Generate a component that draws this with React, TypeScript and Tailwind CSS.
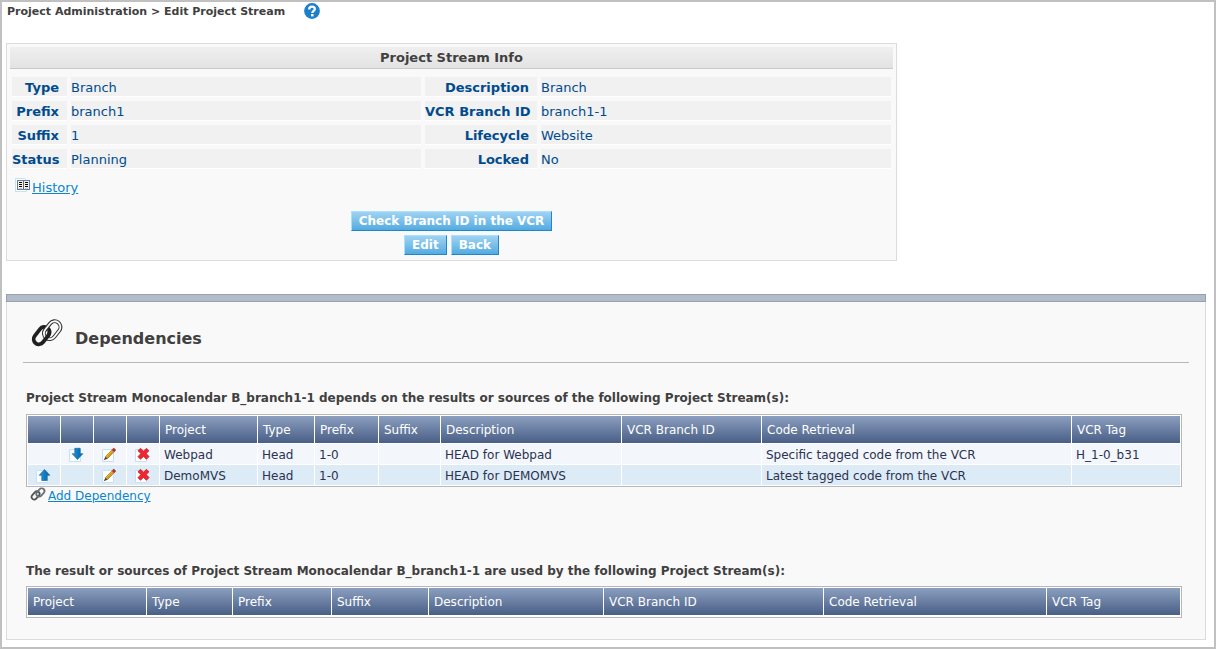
import React from "react";

type Field = { label: string; value: string };

const leftFields: Field[] = [
  { label: "Type", value: "Branch" },
  { label: "Prefix", value: "branch1" },
  { label: "Suffix", value: "1" },
  { label: "Status", value: "Planning" },
];

const rightFields: Field[] = [
  { label: "Description", value: "Branch" },
  { label: "VCR Branch ID", value: "branch1-1" },
  { label: "Lifecycle", value: "Website" },
  { label: "Locked", value: "No" },
];

const columns = [
  "Project",
  "Type",
  "Prefix",
  "Suffix",
  "Description",
  "VCR Branch ID",
  "Code Retrieval",
  "VCR Tag",
];

const rows = [
  {
    move: "down",
    cells: ["Webpad", "Head", "1-0", "", "HEAD for Webpad", "", "Specific tagged code from the VCR", "H_1-0_b31"],
  },
  {
    move: "up",
    cells: ["DemoMVS", "Head", "1-0", "", "HEAD for DEMOMVS", "", "Latest tagged code from the VCR", ""],
  },
];

function HelpIcon() {
  return (
    <svg viewBox="0 0 16 16" className="block size-4" aria-hidden="true">
      <circle cx="8" cy="8" r="7.9" fill="#1b80c9" />
      <path d="M5.2 6.5C5.2 4.6 6.3 3.7 8 3.7s2.8 1 2.8 2.4c0 1.8-2.5 1.9-2.5 3.9" fill="none" stroke="#fff" strokeWidth="2.3" />
      <rect x="7.1" y="11" width="2.4" height="2.4" fill="#fff" />
    </svg>
  );
}

function HistoryIcon() {
  return (
    <svg viewBox="0 0 15 14" className="block h-[14px] w-[15px]" aria-hidden="true">
      <path d="M.5.5h9l2 2v11H.5z" fill="#fdfeff" stroke="#c5e1f2" />
      <rect x="2.5" y="2.5" width="12" height="9" fill="#f5f0e4" stroke="#5f7cb5" />
      <path d="M8.5 3v8" stroke="#6b6b60" />
      <path d="M4 4.5h3M4 6.5h3M4 8.5h3M10 4.5h3M10 6.5h3M10 8.5h3" stroke="#000" />
      <path d="M4 10.5h3M10 10.5h3" stroke="#cfc6a8" />
    </svg>
  );
}

function PageBack() {
  return <path d="M.5 2.5h11v12H.5z" fill="#fdfeff" stroke="#c5e1f2" />;
}

function ArrowIcon({ up }: { up: boolean }) {
  return (
    <svg viewBox="0 0 15 15" className="block size-[15px]" aria-hidden="true">
      <defs>
        <linearGradient id={up ? "arrowUp" : "arrowDown"} x1="0" y1="0" x2="1" y2="0">
          <stop offset="0" stopColor="#1b9be0" />
          <stop offset="1" stopColor="#075f9f" />
        </linearGradient>
      </defs>
      <PageBack />
      {up ? (
        <path d="M8.5 1.5l5.3 5.8h-2.6v5.2H5.8V7.3H3.2z" fill="url(#arrowUp)" stroke="#176aa5" strokeWidth=".7" />
      ) : (
        <path d="M8.5 12.5L3.2 6.7h2.6V1.3h5.4v5.4h2.6z" fill="url(#arrowDown)" stroke="#176aa5" strokeWidth=".7" />
      )}
    </svg>
  );
}

function PencilIcon() {
  return (
    <svg viewBox="0 0 15 15" className="block size-[15px]" aria-hidden="true">
      <PageBack />
      <path d="M3.4 9.7l6.8-7 2 2-6.8 7z" fill="#f0b41c" stroke="#93702a" strokeWidth=".7" />
      <path d="M4.6 11l6.8-7" stroke="#b8760b" strokeWidth=".8" />
      <path d="M10.2 2.7l1.5-1.7 2.1 2-1.6 1.7z" fill="#b52e36" stroke="#7c2329" strokeWidth=".5" />
      <path d="M3.4 9.7l2 2-3.7 1.5z" fill="#4b3d2e" />
    </svg>
  );
}

function DeleteIcon() {
  return (
    <svg viewBox="0 0 15 15" className="block size-[15px]" aria-hidden="true">
      <PageBack />
      <path
        d="M5.6 1.3l2.9 3 2.9-3 2.6 2.5-2.9 2.8 3 3-2.7 2.7-2.9-2.9-3 2.9-2.6-2.6 3-3.1-3-2.8z"
        fill="#ee2630"
        stroke="#c9151e"
        strokeWidth=".7"
      />
    </svg>
  );
}

function DependenciesIcon() {
  return (
    <svg viewBox="0 0 32 28" className="block h-7 w-8" aria-hidden="true">
      <g fill="none">
        <rect x="-5.2" y="-9.6" width="10.4" height="19.2" rx="5.2" transform="translate(10.6 16.6) rotate(38)" stroke="#202020" strokeWidth="3.8" />
        <g transform="translate(21.2 11.2) rotate(38)">
          <rect x="-5.8" y="-9.8" width="11.6" height="19.6" rx="5.8" stroke="#303030" strokeWidth="3.9" />
          <rect x="-5.8" y="-9.8" width="11.6" height="19.6" rx="5.8" stroke="#fafafa" strokeWidth="1.8" />
        </g>
        <path d="M3 -8.6A5.2 5.2 0 0 1 5.2 -4.4V1" transform="translate(10.6 16.6) rotate(38)" stroke="#202020" strokeWidth="3.8" />
      </g>
    </svg>
  );
}

function AddDependencyIcon() {
  return (
    <svg viewBox="0 0 16 14" className="block h-[14px] w-4" aria-hidden="true">
      <g fill="none" strokeWidth="1.8">
        <rect x="-2.6" y="-4.6" width="5.2" height="9.2" rx="2.6" transform="translate(5.6 8.4) rotate(42)" stroke="#4d5254" />
        <rect x="-2.7" y="-4.7" width="5.4" height="9.4" rx="2.7" transform="translate(10.4 5.5) rotate(42)" stroke="#6b7173" />
      </g>
    </svg>
  );
}

function FieldColumn({ fields, labelWidth }: { fields: Field[]; labelWidth: string }) {
  return (
    <dl className="flex min-w-0 flex-1 flex-col gap-1">
      {fields.map((f) => (
        <div key={f.label} className="flex h-5 gap-1 leading-[22px] text-[#004b8d]">
          <dt className={`${labelWidth} shrink-0 whitespace-nowrap border-b border-white bg-[#f1f1f1] pr-2 text-right font-bold`}>
            {f.label}
          </dt>
          <dd className="min-w-0 flex-1 border-b border-white bg-[#f1f1f1]">{f.value}</dd>
        </div>
      ))}
    </dl>
  );
}

function ActionButton({ children }: { children: React.ReactNode }) {
  return (
    <button
      type="button"
      className="h-5 cursor-pointer whitespace-nowrap border border-t-[#a9e3f9] border-r-[#1f86c9] border-b-[#1f86c9] border-l-[#a9e3f9] bg-linear-to-b from-[#9fd3f3] to-[#52abe0] px-[7px] text-[12px] leading-[18px] font-bold text-white"
    >
      {children}
    </button>
  );
}

const headCell =
  "h-[27px] bg-linear-to-b from-[#8c9fc0] to-[#4a5f86] px-[5px] py-0 text-left font-normal whitespace-nowrap text-white";
const tableStyle =
  "w-full table-fixed border-separate border-spacing-px border border-[#b8b8b8] bg-white text-[12px] leading-[18px]";

export default function App() {
  return (
    <div className="min-h-screen border-2 border-[#c0c0c0] bg-white px-1 pb-[6px] font-['Verdana','DejaVu_Sans',sans-serif] text-[13px] text-[#404040]">
      <header className="flex h-[41px] items-start gap-[19px] pl-px pt-px">
        <h1 className="text-[11px] leading-[18px] font-bold whitespace-nowrap">
          Project Administration &gt; Edit Project Stream
        </h1>
        <a href="#help" aria-label="Help">
          <HelpIcon />
        </a>
      </header>

      <section className="max-w-[891px] border border-[#dcdcdc] bg-[#f9f9f9] px-[3px] pt-[3px] pb-[5px]">
        <h2 className="h-[22px] border-b border-[#c8c8c8] bg-linear-to-b from-[#efefef] to-[#e3e3e3] text-center leading-[21px] font-bold">
          Project Stream Info
        </h2>
        <div className="flex gap-1 px-[2px] pt-2">
          <FieldColumn fields={leftFields} labelWidth="w-[55px]" />
          <div className="flex w-[466px] shrink-0">
            <FieldColumn fields={rightFields} labelWidth="w-28" />
          </div>
        </div>
        <a href="#history" className="ml-[5px] mt-[9px] flex w-fit items-start gap-[2px] text-[#0a85cf]">
          <HistoryIcon />
          <span className="leading-5 underline">History</span>
        </a>
        <div className="mt-[13px] flex flex-col items-center gap-1">
          <ActionButton>Check Branch ID in the VCR</ActionButton>
          <div className="flex gap-1">
            <ActionButton>Edit</ActionButton>
            <ActionButton>Back</ActionButton>
          </div>
        </div>
      </section>

      <section className="mt-[33px] mr-1">
        <div className="h-2 border border-[#98a1b2] bg-[#b3bac8]" />
        <div className="border border-t-0 border-[#dcdcdc] bg-[#f9f9f9] px-4 pb-[21px]">
          <div className="flex h-[61px] items-start gap-3 border-b border-[#b8b8b8] pt-[17px] pl-2">
            <DependenciesIcon />
            <h2 className="pt-2 text-[16px] leading-6 font-bold">Dependencies</h2>
          </div>

          <div className="pr-[7px] pl-[3px]">
            <h3 className="mt-[25px] mb-[6px] text-[12px] leading-5 font-bold">
              Project Stream Monocalendar B_branch1-1 depends on the results or sources of the following Project
              Stream(s):
            </h3>
            <table className={tableStyle}>
              <colgroup>
                <col className="w-8" />
                <col className="w-8" />
                <col className="w-8" />
                <col className="w-8" />
                <col className="w-[97px]" />
                <col className="w-14" />
                <col className="w-[63px]" />
                <col className="w-[61px]" />
                <col className="w-[180px]" />
                <col className="w-[139px]" />
                <col className="w-[309px]" />
                <col />
              </colgroup>
              <thead>
                <tr>
                  {["Move up", "Move down", "Edit", "Delete"].map((name) => (
                    <th key={name} aria-label={name} className={headCell} />
                  ))}
                  {columns.map((c) => (
                    <th key={c} className={headCell}>
                      {c}
                    </th>
                  ))}
                </tr>
              </thead>
              <tbody className="text-[#2b3350]">
                {rows.map((r) => (
                  <tr key={r.cells[0]} className="bg-[#f3f6fb] even:bg-[#ddebf6]">
                    <td className="h-5 p-0 pl-2">
                      {r.move === "up" && (
                        <button type="button" aria-label="Move up" className="block cursor-pointer">
                          <ArrowIcon up />
                        </button>
                      )}
                    </td>
                    <td className="h-5 p-0 pl-2">
                      {r.move === "down" && (
                        <button type="button" aria-label="Move down" className="block cursor-pointer">
                          <ArrowIcon up={false} />
                        </button>
                      )}
                    </td>
                    <td className="h-5 p-0 pl-2">
                      <button type="button" aria-label="Edit" className="block cursor-pointer">
                        <PencilIcon />
                      </button>
                    </td>
                    <td className="h-5 p-0 pl-2">
                      <button type="button" aria-label="Delete" className="block cursor-pointer">
                        <DeleteIcon />
                      </button>
                    </td>
                    {r.cells.map((cell, i) => (
                      <td key={columns[i]} className="h-5 px-1 pt-[2px] pb-0 whitespace-nowrap">
                        {cell}
                      </td>
                    ))}
                  </tr>
                ))}
              </tbody>
            </table>
            <a href="#add-dependency" className="ml-1 flex w-fit items-start gap-[2px] text-[#0a85cf]">
              <AddDependencyIcon />
              <span className="text-[12px] leading-[18px] underline">Add Dependency</span>
            </a>

            <h3 className="mt-[56px] mb-[5px] text-[12px] leading-5 font-bold">
              The result or sources of Project Stream Monocalendar B_branch1-1 are used by the following Project
              Stream(s):
            </h3>
            <div className="border border-[#b8b8b8] bg-white pb-px">
              <table className="w-full table-fixed border-separate border-spacing-px text-[12px] leading-[18px]">
                <colgroup>
                  <col className="w-[118px]" />
                  <col className="w-[85px]" />
                  <col className="w-[98px]" />
                  <col className="w-24" />
                  <col className="w-[174px]" />
                  <col className="w-[219px]" />
                  <col className="w-[222px]" />
                  <col />
                </colgroup>
                <thead>
                  <tr>
                    {columns.map((c) => (
                      <th key={c} className={headCell}>
                        {c}
                      </th>
                    ))}
                  </tr>
                </thead>
              </table>
            </div>
          </div>
        </div>
      </section>
    </div>
  );
}
